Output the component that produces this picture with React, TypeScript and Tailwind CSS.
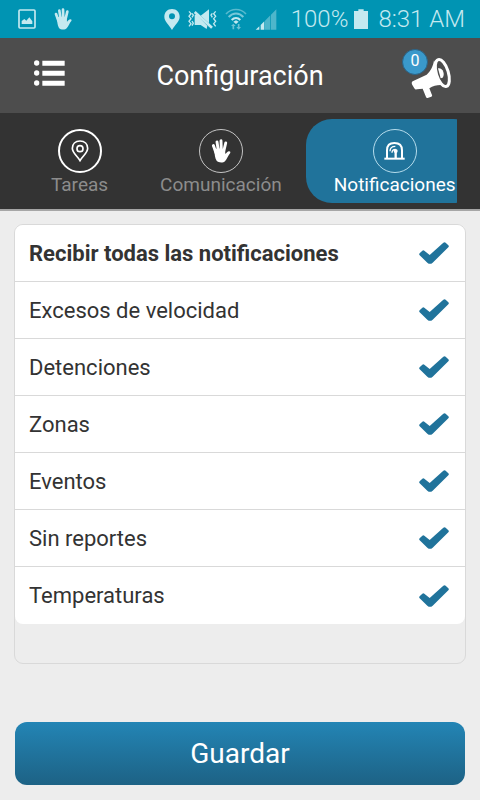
import { useState } from 'react';
import type { ReactNode } from 'react';

const alerts = [
  { id: 'velocidad', name: 'Excesos de velocidad' },
  { id: 'detenciones', name: 'Detenciones' },
  { id: 'zonas', name: 'Zonas' },
  { id: 'eventos', name: 'Eventos' },
  { id: 'reportes', name: 'Sin reportes' },
  { id: 'temperaturas', name: 'Temperaturas' },
];

function HandIcon({ className }: { className: string }) {
  return (
    <svg viewBox="0 0 54 66" className={className} fill="currentColor" aria-hidden="true">
      <g stroke="currentColor" strokeWidth="8" strokeLinecap="round">
        <path d="M13 38 6 18M20 34 16 8M28 34 27 5M34 36 40 11" />
      </g>
      <path d="M8 28 C13 26 32 25 38 30 L39 41 C42 39 44 35 48 34 C52 33 54 36 52 39 C47 44 44 54 38 61 C34 66 20 66 15 60 C10 52 10 42 8 28Z" />
    </svg>
  );
}

function PictureIcon() {
  return (
    <svg viewBox="0 0 54 60" className="w-[18px] h-5" aria-hidden="true">
      <rect x="3" y="3" width="48" height="54" rx="3" fill="none" stroke="currentColor" strokeWidth="5" />
      <path d="M11 45V36L19 30L25 35L34 25L43 37V45Z" fill="currentColor" />
    </svg>
  );
}

function LocationIcon() {
  return (
    <svg viewBox="0 0 48 63" className="w-4 h-[21px]" aria-hidden="true">
      <path
        fillRule="evenodd"
        fill="currentColor"
        d="M24 0C10 0 1 10 1 23C1 37 14 46 24 63C34 46 47 37 47 23C47 10 38 0 24 0ZM24 13A9 9 0 1 1 24 31A9 9 0 0 1 24 13Z"
      />
    </svg>
  );
}

function VibrateIcon() {
  return (
    <svg viewBox="0 0 87 63" className="w-[29px] h-[21px]" aria-hidden="true">
      <path d="M38 20 63 1V43ZM20 17H26L58 50L56 60L38 48H20Z" fill="currentColor" />
      <path d="M20 9 72 56" stroke="currentColor" strokeWidth="8" />
      <path
        d="M3 7 9 14 3 22 9 29 3 37 9 44 3 52M12 13 16 18 12 25M12 36 16 43 12 50M83 7 77 14 83 22 77 29 83 37 77 44 83 52M73 13 69 18 73 25"
        fill="none"
        stroke="currentColor"
        strokeWidth="4"
      />
    </svg>
  );
}

function WifiIcon() {
  return (
    <svg viewBox="0 0 66 66" className="w-[22px] h-[22px]" fill="none" stroke="currentColor" aria-hidden="true">
      <path d="M3 18C19 0 47 0 63 18" strokeWidth="5" opacity="0.45" />
      <path d="M11 27C24 13 42 13 55 27" strokeWidth="6" opacity="0.6" />
      <path d="M20 36C28 28 38 28 46 36" strokeWidth="6" />
      <path d="M25 41 33 37 41 41 33 48Z" fill="currentColor" stroke="none" />
      <g opacity="0.55" strokeWidth="5">
        <path d="M25 64V51M41 48V60" />
        <path d="M18 54 25 47 32 54ZM34 57 41 65 48 57Z" fill="currentColor" stroke="none" />
      </g>
    </svg>
  );
}

function SignalIcon() {
  return (
    <svg viewBox="0 0 66 63" className="w-[22px] h-[21px]" fill="currentColor" aria-hidden="true">
      <path d="M2 62 13 52V62ZM17 48 28 37V62H17Z" />
      <path d="M30 35 46 19V62H30ZM48 17 64 1V62H48Z" opacity="0.4" />
    </svg>
  );
}

function BatteryIcon() {
  return (
    <svg viewBox="0 0 42 60" className="w-3.5 h-5" fill="currentColor" aria-hidden="true">
      <path d="M13 1H29V6H42V60H0V6H13Z" />
    </svg>
  );
}

function ListIcon() {
  return (
    <svg viewBox="0 0 93 78" className="w-[31px] h-[26px]" fill="currentColor" aria-hidden="true">
      <circle cx="8" cy="9" r="8" />
      <circle cx="8" cy="39" r="8" />
      <circle cx="8" cy="69" r="8" />
      <path d="M25 2H92V17H25ZM25 32H92V47H25ZM25 62H92V77H25Z" />
    </svg>
  );
}

function MegaphoneIcon() {
  return (
    <svg viewBox="0 0 126 126" className="w-[42px] h-[42px]" aria-hidden="true">
      <path
        d="M72 10C70 26 62 43 50 53L8 73C4 76 5 80 7 84L12 92C14 96 17 98 21 97L38 95L48 120C49 124 52 124 55 122L64 119C67 118 67 115 65 112L58 94C74 84 92 82 110 87Z"
        fill="currentColor"
      />
      <ellipse
        cx="97"
        cy="48"
        rx="18"
        ry="42"
        transform="rotate(-17 97 48)"
        fill="#4d4d4d"
        stroke="currentColor"
        strokeWidth="9"
      />
      <path d="M84 34C98 31 106 51 98 62L92 64Z" fill="currentColor" />
    </svg>
  );
}

function TaskPinIcon() {
  return (
    <svg viewBox="0 0 54 66" className="w-[18px] h-[22px]" fill="none" stroke="currentColor" strokeWidth="5" aria-hidden="true">
      <path d="M27 3C13 3 4 12 4 25C4 39 18 46 27 62C36 46 50 39 50 25C50 12 41 3 27 3Z" />
      <circle cx="27" cy="26" r="9" />
    </svg>
  );
}

function SirenIcon() {
  return (
    <svg viewBox="0 0 63 54" className="w-[21px] h-[18px]" fill="none" stroke="currentColor" aria-hidden="true">
      <path d="M1 50H62" strokeWidth="6" />
      <path d="M9 49V25C9 9 19 3 31 3S54 9 54 25V49" strokeWidth="6" />
      <path d="M18 28C18 18 24 13 34 13M24 32C24 25 28 22 35 22" strokeWidth="4" />
      <path d="M35 26V48" strokeWidth="7" />
      <circle cx="35" cy="27" r="6" fill="currentColor" stroke="none" />
    </svg>
  );
}

function CheckIcon() {
  return (
    <svg
      viewBox="0 0 90 66"
      className="col-start-1 row-start-1 w-[30px] h-[22px] invisible peer-checked:visible pointer-events-none"
      aria-hidden="true"
    >
      <path
        d="M10 26Q13 23 16 26L32 39L73 2Q77 -1 80 2L88 10Q91 13 88 16L41 62Q33 69 25 62L2 40Q-1 37 2 34Z"
        fill="#20739b"
      />
    </svg>
  );
}

type TabProps = {
  label: string;
  active: boolean;
  ring: string;
  onClick: () => void;
  children: ReactNode;
};

function Tab({ label, active, ring, onClick, children }: TabProps) {
  return (
    <button
      role="tab"
      aria-selected={active}
      onClick={onClick}
      className={`shrink-0 h-[84px] pl-7 pr-6 pt-2.5 flex flex-col items-center rounded-[26px] text-[19px] leading-6 ${
        active ? 'bg-[#20739b] text-white' : 'text-[#8c8c8c]'
      }`}
    >
      <span className={`size-11 shrink-0 rounded-full flex items-center justify-center text-white ${ring}`}>
        {children}
      </span>
      {label}
    </button>
  );
}

type RowProps = {
  id: string;
  name: string;
  checked: boolean;
  bold?: boolean;
  onChange: () => void;
};

function Row({ id, name, checked, bold, onChange }: RowProps) {
  return (
    <li className="flex items-center h-[57px] pl-3.5 pr-4 border-b border-[#d9d9d9] last:border-b-0">
      <label htmlFor={id} className={`grow ${bold ? 'font-bold' : ''}`}>
        {name}
      </label>
      <span className="grid place-items-center">
        <input
          id={id}
          type="checkbox"
          checked={checked}
          onChange={onChange}
          className="peer appearance-none col-start-1 row-start-1 w-[30px] h-[22px]"
        />
        <CheckIcon />
      </span>
    </li>
  );
}

export default function App() {
  const [tab, setTab] = useState('notificaciones');
  const [selected, setSelected] = useState(alerts.map((a) => a.id));

  const allSelected = selected.length === alerts.length;

  const toggle = (id: string) => {
    setSelected(selected.includes(id) ? selected.filter((s) => s !== id) : [...selected, id]);
  };

  return (
    <div className="min-h-screen bg-[#ededed] font-[Roboto,sans-serif] text-[#333]">
      {/* Status bar */}
      <div className="h-[38px] pl-[18px] pr-[15px] flex items-center bg-[#0094b3] text-[#c4e9f0] text-2xl font-light">
        <div className="flex items-center gap-[18px]">
          <PictureIcon />
          <HandIcon className="w-[18px] h-[22px]" />
        </div>
        <div className="ml-auto flex items-center gap-2">
          <LocationIcon />
          <VibrateIcon />
          <WifiIcon />
          <SignalIcon />
        </div>
        <span className="ml-3.5">100%</span>
        <span className="ml-1.5">
          <BatteryIcon />
        </span>
        <span className="ml-2.5">8:31 AM</span>
      </div>

      {/* Header */}
      <header className="h-[75px] px-7 grid grid-cols-[50px_1fr_50px] items-center bg-[#4d4d4d] text-white">
        <button aria-label="Menú" className="pl-1.5 pb-1.5">
          <ListIcon />
        </button>
        <h1 className="text-center text-[27px] leading-8">Configuración</h1>
        <button aria-label="Avisos" className="relative justify-self-end pt-1">
          <MegaphoneIcon />
          <span className="absolute -top-1 -left-2 size-[26px] rounded-full border border-[#2a6387] bg-[#3a99cb] text-base leading-[22px] text-center">
            0
          </span>
        </button>
      </header>

      {/* Tabs */}
      <nav className="h-[98px] px-[23px] pt-1.5 bg-[#333] border-b-2 border-[#a6a6a6]">
        <div role="tablist" className="flex overflow-hidden">
          <Tab label="Tareas" active={tab === 'tareas'} ring="border-2 border-white" onClick={() => setTab('tareas')}>
            <TaskPinIcon />
          </Tab>
          <Tab
            label="Comunicación"
            active={tab === 'comunicacion'}
            ring="border border-[#c4c4c4]"
            onClick={() => setTab('comunicacion')}
          >
            <HandIcon className="w-5 h-6" />
          </Tab>
          <Tab
            label="Notificaciones"
            active={tab === 'notificaciones'}
            ring="border border-[#b5dcec]"
            onClick={() => setTab('notificaciones')}
          >
            <SirenIcon />
          </Tab>
        </div>
      </nav>

      <main className="px-3.5 pt-[13px] pb-4">
        <div className="h-[440px] border border-[#d9d9d9] rounded-[9px]">
          <ul className="bg-white rounded-lg text-[22px]">
            <Row
              id="todas"
              name="Recibir todas las notificaciones"
              bold
              checked={allSelected}
              onChange={() => setSelected(allSelected ? [] : alerts.map((a) => a.id))}
            />
            {alerts.map((alert) => (
              <Row
                key={alert.id}
                id={alert.id}
                name={alert.name}
                checked={selected.includes(alert.id)}
                onChange={() => toggle(alert.id)}
              />
            ))}
          </ul>
        </div>

        <div className="px-px pt-[58px]">
          <button className="w-full h-[63px] rounded-xl bg-linear-to-b from-[#2385b5] to-[#1d6285] text-white text-[28px]">
            Guardar
          </button>
        </div>
      </main>
    </div>
  );
}
